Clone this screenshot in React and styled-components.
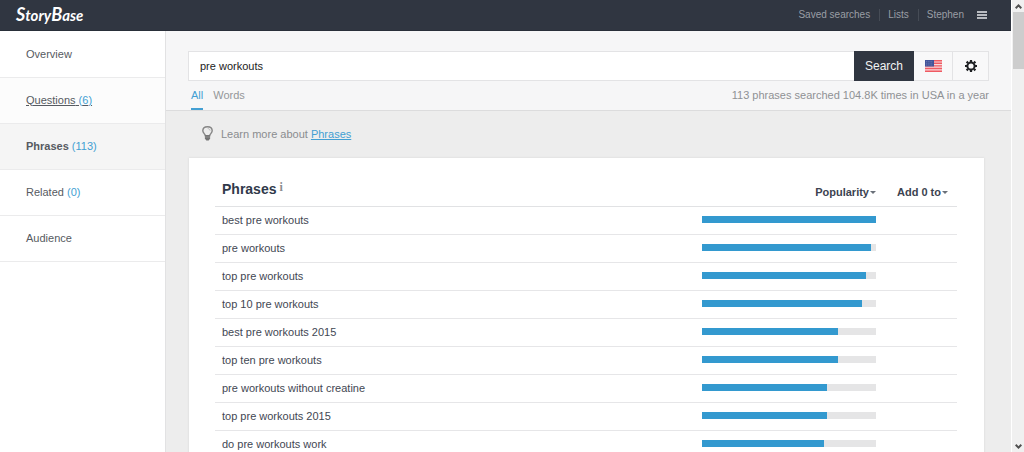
import React from "react";
import styled, { createGlobalStyle } from "styled-components";

const GlobalStyle = createGlobalStyle`
  * { box-sizing: border-box; }
  body {
    margin: 0;
    overflow: hidden;
    background: #ededed;
    color: #3f4753;
    font-family: "Liberation Sans", Arial, sans-serif;
    font-size: 11px;
    line-height: 14px;
  }
  button, input { font: inherit; }
`;

const Shell = styled.div`
  display: flex;
  height: 100vh;
  overflow: hidden;
`;

const Page = styled.div`
  flex: 1;
  min-width: 0;
  display: flex;
  flex-direction: column;
`;

const TopBar = styled.header`
  flex: none;
  height: 31px;
  padding: 0 24px 0 16px;
  display: flex;
  align-items: center;
  justify-content: space-between;
  background: #303641;
  border-bottom: 1px solid #292f39;
`;

const Logo = styled.a`
  color: #fff;
  font-family: Lato, "Liberation Sans", sans-serif;
  font-size: 15px;
  line-height: 24px;
  padding-bottom: 2px;
  font-style: italic;
  font-weight: 700;
  text-decoration: none;
`;

const Initial = styled.span`
  font-size: 18px;
`;

const TopNav = styled.nav`
  display: flex;
  align-items: center;
`;

const TopLink = styled.a`
  padding: 0 9px 0 8px;
  font-size: 10px;
  line-height: 12px;
  color: #9a9ea5;
  text-decoration: none;
  border-left: 1px solid ${(p) => (p.$first ? "transparent" : "#464c56")};
`;

const IconButton = styled.button`
  display: flex;
  padding: 0;
  margin-left: 4px;
  border: 0;
  background: none;
`;

const Body = styled.div`
  flex: 1;
  min-height: 0;
  display: flex;
`;

const Sidebar = styled.nav`
  flex: none;
  width: 166px;
  padding-top: 1px;
  background: #fff;
  border-right: 1px solid #e2e2e3;
`;

const SideLink = styled.a`
  display: flex;
  align-items: center;
  height: 46px;
  padding: 0 0 2px 26px;
  border-bottom: 1px solid #ebebec;
  color: #565a61;
  background: ${(p) => (p.$active ? "#f5f5f5" : p.$hover ? "#fcfcfc" : "#fff")};
  text-decoration: ${(p) => (p.$hover ? "underline" : "none")};
  font-weight: ${(p) => (p.$active ? 700 : 400)};
`;

const Count = styled.span`
  color: #439fd3;
  font-weight: 400;
`;

const Main = styled.main`
  flex: 1;
  min-width: 0;
`;

const SearchPanel = styled.section`
  padding: 20px 22px 0;
  background: #f6f6f7;
  border-bottom: 1px solid #dcdcdd;
`;

const SearchForm = styled.form`
  display: flex;
  height: 30px;
`;

const SearchInput = styled.input`
  flex: 1;
  min-width: 0;
  padding: 0 11px;
  border: 1px solid #e3e3e5;
  border-right: 0;
  border-radius: 0;
  background: #fff;
  color: #222;
  outline: 0;
`;

const SearchButton = styled.button`
  width: 60px;
  padding: 0;
  border: 0;
  background: #303641;
  color: #f1f2f3;
  font-size: 12px;
`;

const OptionButton = styled.button`
  display: flex;
  align-items: center;
  justify-content: center;
  width: ${(p) => p.$width}px;
  padding: 0;
  border: 1px solid #e3e3e5;
  border-left: 0;
  background: #f8f8f9;
`;

const SubBar = styled.div`
  display: flex;
  justify-content: space-between;
  height: 29px;
  line-height: 28px;
  color: #8f9194;
`;

const Tabs = styled.div`
  display: flex;
  gap: 10px;
  padding-left: 3px;
`;

const Tab = styled.a`
  color: ${(p) => (p.$active ? "#439fd3" : "#949699")};
  border-bottom: 2px solid ${(p) => (p.$active ? "#439fd3" : "transparent")};
  text-decoration: none;
`;

const Tip = styled.p`
  display: flex;
  align-items: center;
  gap: 8px;
  margin: 0;
  padding: 15px 36px 17px;
  color: #8a8c8f;
`;

const TipLink = styled.a`
  color: #439fd3;
`;

const Card = styled.section`
  margin: 0 27px 0 23px;
  padding: 17px 27px 17px 26px;
  background: #fff;
  box-shadow: 0 0 2px #d3d3d3;
`;

const Table = styled.table`
  width: 100%;
  table-layout: fixed;
  border-collapse: collapse;
`;

const Th = styled.th`
  width: ${(p) => p.$width || "auto"};
  height: 31px;
  padding: ${(p) => p.$pad || "0"};
  border-bottom: 1px solid #e1e2e4;
  text-align: ${(p) => p.$align || "left"};
  vertical-align: middle;
`;

const Title = styled.h2`
  display: flex;
  gap: 3px;
  margin: 0;
  padding-bottom: 2px;
  color: #30394a;
  font-size: 14px;
  line-height: 16px;
`;

const Info = styled.span`
  color: #8b8d90;
  font-family: "Liberation Serif", serif;
  font-size: 12px;
  line-height: 12px;
`;

const MenuButton = styled.button`
  display: inline-flex;
  align-items: center;
  gap: 1px;
  padding: 4px 0 0;
  border: 0;
  background: none;
  color: #3c4350;
  font-weight: 700;
  white-space: nowrap;
`;

const Caret = styled.span`
  border: 3px solid transparent;
  border-top-color: #6a7079;
  border-bottom: 0;
`;

const Td = styled.td`
  height: 28px;
  padding: ${(p) => p.$pad || "0"};
  border-bottom: 1px solid #e6e6e8;
`;

const Track = styled.div`
  height: 7px;
  margin-bottom: 2px;
  background: #e5e5e6;
`;

const Fill = styled.div`
  height: 100%;
  background: #3399cf;
`;

const Scrollbar = styled.div`
  flex: none;
  width: 13px;
  display: flex;
  flex-direction: column;
  align-items: center;
  background: #f0f0f0;
  border-left: 1px solid #fff;
`;

const ScrollEnd = styled.div`
  height: 12px;
  display: flex;
  align-items: center;
`;

const Thumb = styled.div`
  width: 11px;
  height: 57px;
  margin-bottom: auto;
  background: #cdcdcd;
`;

const Chevron = ({ down }) => (
  <svg width="7" height="5" viewBox="0 0 7 5" fill="none" stroke="#505050" strokeWidth="2">
    <path d={down ? "M.7 .8 3.5 3.6 6.3 .8" : "M.7 4.2 3.5 1.4 6.3 4.2"} />
  </svg>
);

const MenuIcon = () => (
  <svg width="10" height="8" viewBox="0 0 10 8" fill="#b8bbc0">
    <path d="M0 0h10v2H0zM0 3h10v2H0zM0 6h10v2H0z" />
  </svg>
);

const Flag = () => (
  <svg width="17" height="12" viewBox="0 0 17 12">
    <path fill="#f9d9dc" d="M0 0h17v12H0z" />
    <path
      stroke="#ef5a62"
      strokeWidth="1.4"
      d="M0 .7h17M0 3.3h17M0 5.9h17M0 8.5h17M0 11.2h17"
    />
    <path fill="#42549a" d="M0 0h9v6.5H0z" />
    <path stroke="#8490bf" strokeWidth=".7" strokeDasharray=".8 1" d="M1 1.4h7M1 3.2h7M1 5h7" />
  </svg>
);

const Gear = () => (
  <svg width="12" height="12" viewBox="0 0 12 12" fill="none" stroke="#1d1f22">
    <circle cx="6" cy="6" r="3.6" strokeWidth="2" />
    <path
      strokeWidth="2.2"
      d="M6 0v2M6 10v2M0 6h2M10 6h2M1.6 1.6l1.4 1.4M9 9l1.4 1.4M10.4 1.6 9 3M3 9l-1.4 1.4"
    />
  </svg>
);

const Bulb = () => (
  <svg width="11" height="15" viewBox="0 0 11 15" fill="none">
    <path
      stroke="#858585"
      strokeWidth="1.4"
      d="M3.3 9.6C3.2 7.9.8 7.1.8 4.8.8 2.3 2.9.7 5.5.7s4.7 1.6 4.7 4.1c0 2.3-2.4 3.1-2.5 4.8z"
    />
    <path stroke="#aaa" strokeWidth=".8" d="M5.7 2.6c1.3 0 2.2.7 2.4 2" />
    <path fill="#747474" d="M2.9 9.2h5.2v3.3L6.7 14.6H4.3L2.9 12.5z" />
    <path stroke="#a5a5a5" strokeWidth=".6" d="M3 11h5" />
  </svg>
);

const sections = [
  { name: "Overview" },
  { name: "Questions", count: 6, hover: true },
  { name: "Phrases", count: 113, active: true },
  { name: "Related", count: 0 },
  { name: "Audience" },
];

const phrases = [
  ["best pre workouts", 100],
  ["pre workouts", 97],
  ["top pre workouts", 94],
  ["top 10 pre workouts", 92],
  ["best pre workouts 2015", 78],
  ["top ten pre workouts", 78],
  ["pre workouts without creatine", 72],
  ["top pre workouts 2015", 72],
  ["do pre workouts work", 70],
];

export default function App() {
  return (
    <Shell>
      <GlobalStyle />
      <Page>
        <TopBar>
          <Logo href="#"><Initial>S</Initial>tory<Initial>B</Initial>ase</Logo>
          <TopNav>
            <TopLink href="#" $first>Saved searches</TopLink>
            <TopLink href="#">Lists</TopLink>
            <TopLink href="#">Stephen</TopLink>
            <IconButton aria-label="Menu"><MenuIcon /></IconButton>
          </TopNav>
        </TopBar>
        <Body>
          <Sidebar>
            {sections.map((s) => (
              <SideLink key={s.name} href="#" $active={s.active} $hover={s.hover}>
                <span>
                  {s.name}
                  {s.count !== undefined && <Count> ({s.count})</Count>}
                </span>
              </SideLink>
            ))}
          </Sidebar>
          <Main>
            <SearchPanel>
              <SearchForm onSubmit={(e) => e.preventDefault()}>
                <SearchInput aria-label="Search phrase" defaultValue="pre workouts" />
                <SearchButton type="submit">Search</SearchButton>
                <OptionButton type="button" aria-label="Country" $width={39}><Flag /></OptionButton>
                <OptionButton type="button" aria-label="Settings" $width={36}><Gear /></OptionButton>
              </SearchForm>
              <SubBar>
                <Tabs>
                  <Tab href="#" $active>All</Tab>
                  <Tab href="#">Words</Tab>
                </Tabs>
                <span>113 phrases searched 104.8K times in USA in a year</span>
              </SubBar>
            </SearchPanel>
            <Tip>
              <Bulb />
              <span>Learn more about <TipLink href="#">Phrases</TipLink></span>
            </Tip>
            <Card>
              <Table>
                <thead>
                  <tr>
                    <Th $pad="0 7px"><Title>Phrases<Info>i</Info></Title></Th>
                    <Th $width="174px" $align="right">
                      <MenuButton>Popularity<Caret /></MenuButton>
                    </Th>
                    <Th $width="81px" $align="right" $pad="0 9px 0 0">
                      <MenuButton>Add 0 to<Caret /></MenuButton>
                    </Th>
                  </tr>
                </thead>
                <tbody>
                  {phrases.map(([text, score]) => (
                    <tr key={text}>
                      <Td $pad="0 7px">{text}</Td>
                      <Td><Track><Fill style={{ width: `${score}%` }} /></Track></Td>
                      <Td />
                    </tr>
                  ))}
                </tbody>
              </Table>
            </Card>
          </Main>
        </Body>
      </Page>
      <Scrollbar aria-hidden="true">
        <ScrollEnd><Chevron /></ScrollEnd>
        <Thumb />
        <ScrollEnd><Chevron down /></ScrollEnd>
      </Scrollbar>
    </Shell>
  );
}
